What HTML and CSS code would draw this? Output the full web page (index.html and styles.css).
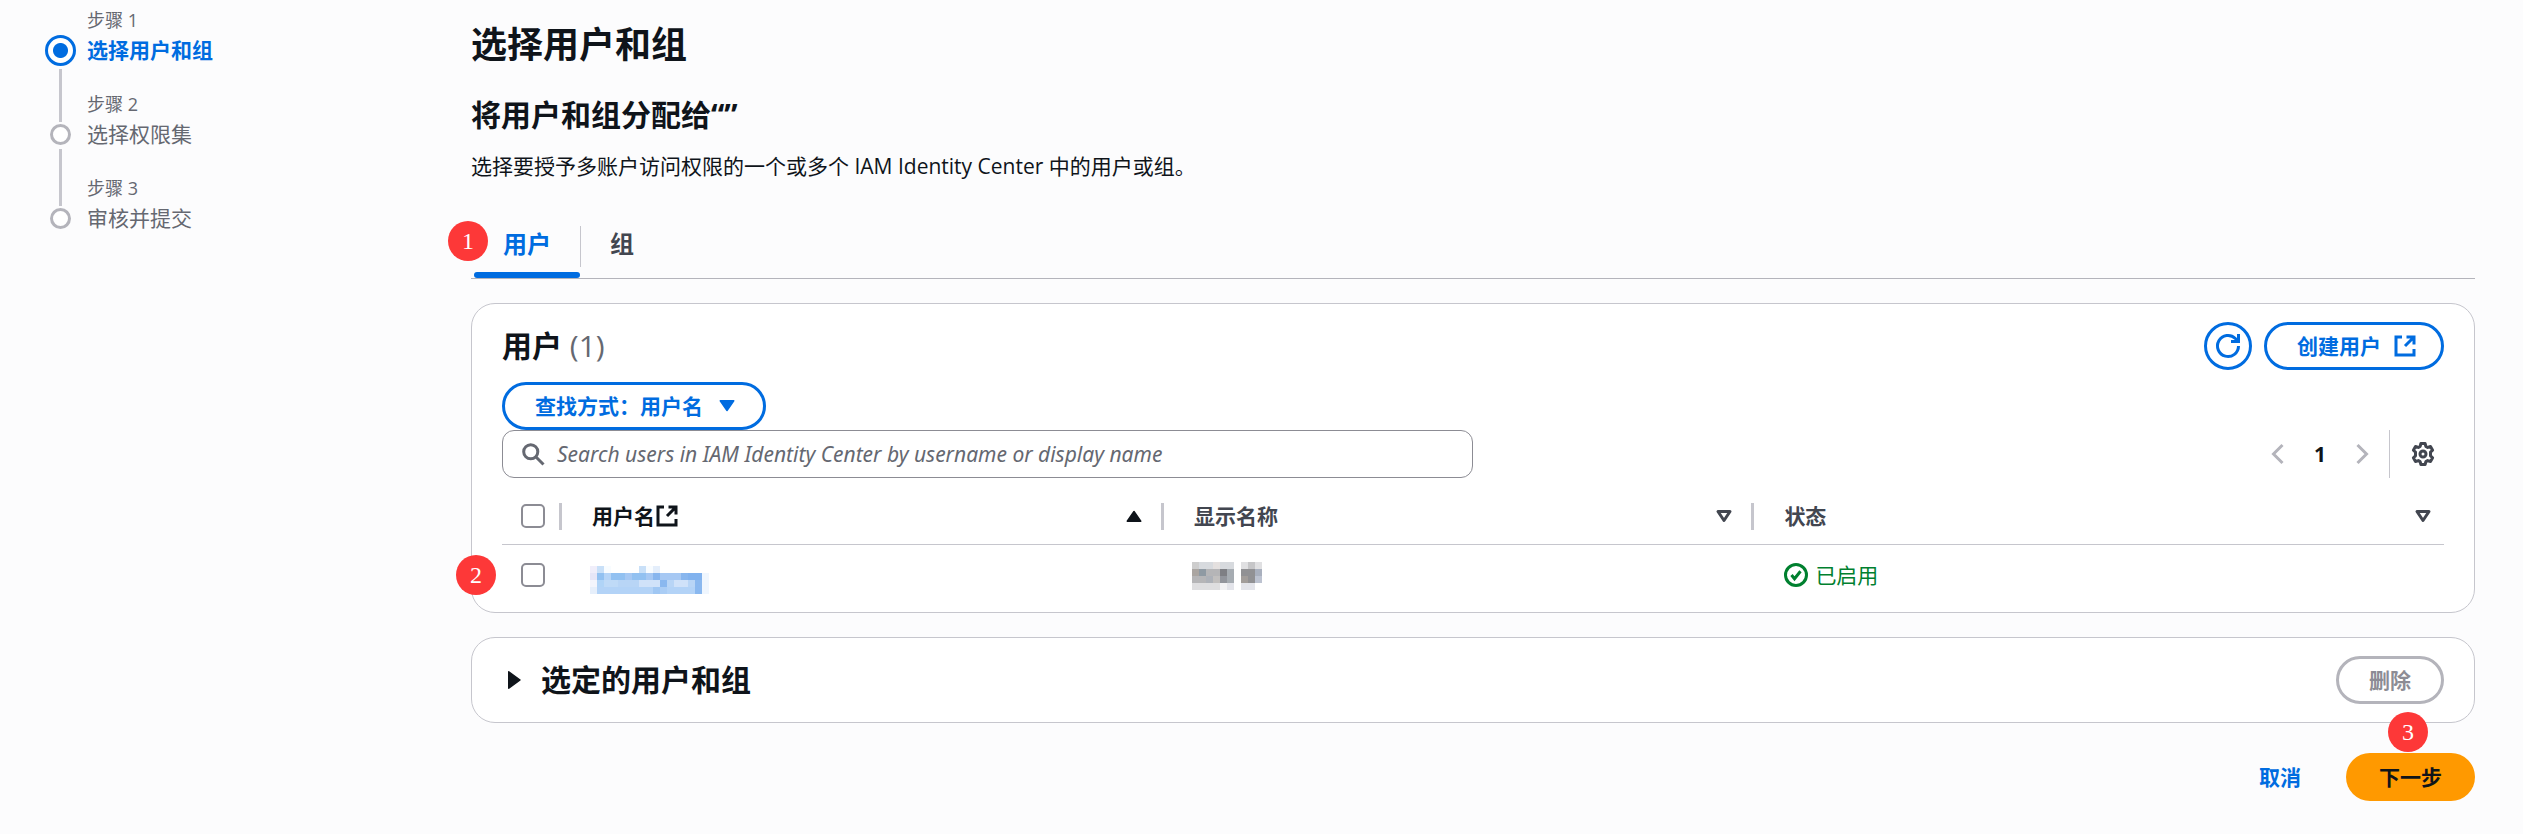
FILE: index.html
```html
<!DOCTYPE html>
<html lang="zh-CN">
<head>
<meta charset="utf-8">
<title>选择用户和组</title>
<link rel="stylesheet" href="styles.css">
</head>
<body>
<div class="layout">
  <nav class="steps" aria-label="步骤">
    <ol class="step-list">
      <li class="step step-active"><span class="step-label">步骤 1</span><span class="step-dot"></span><span class="step-title">选择用户和组</span></li>
      <li class="step"><span class="step-label">步骤 2</span><span class="step-dot"></span><span class="step-title">选择权限集</span></li>
      <li class="step"><span class="step-label">步骤 3</span><span class="step-dot"></span><span class="step-title">审核并提交</span></li>
    </ol>
  </nav>
  <main class="content">
    <h1 class="page-title">选择用户和组</h1>
    <h2 class="section-title">将用户和组分配给“”</h2>
    <p class="description">选择要授予多账户访问权限的一个或多个 IAM Identity Center 中的用户或组。</p>

    <div class="tabs" role="tablist">
      <button class="tab tab-active" role="tab" aria-selected="true" type="button">用户</button>
      <span class="tab-divider"></span>
      <button class="tab" role="tab" aria-selected="false" type="button">组</button>
      <span class="marker marker-tab">1</span>
    </div>

    <section class="card users-card">
      <header class="card-header">
        <h2 class="card-title">用户 <span class="count">(1)</span></h2>
        <div class="actions">
          <button class="button icon-button" type="button" aria-label="刷新">
            <svg class="icon" viewBox="0 0 16 16"><path d="M15 8A7 7 0 1 1 12.900 3L15 5M15 0v5h-5"/></svg>
          </button>
          <button class="button" type="button">创建用户
            <svg class="icon trailing" viewBox="0 0 16 16"><path d="M6 2H2v12h12v-4M9 2h5v5M14 2L8 8"/></svg>
          </button>
        </div>
      </header>
      <button class="button" type="button">查找方式：用户名
        <svg class="icon solid trailing" viewBox="0 0 16 16"><path d="M3.500 4.500h9L8 11z"/></svg>
      </button>
      <div class="toolbar">
        <label class="search">
          <svg class="icon" viewBox="0 0 16 16"><circle cx="6.500" cy="6.500" r="4.700"/><path d="M10 10l5 5"/></svg>
          <input class="search-input" type="text" aria-label="Search users" placeholder="Search users in IAM Identity Center by username or display name">
        </label>
        <div class="pager">
          <button class="plain-button muted" type="button" aria-label="上一页"><svg class="icon" viewBox="0 0 16 16"><path d="M11 2L5 8l6 6"/></svg></button>
          <span class="page-number">1</span>
          <button class="plain-button muted" type="button" aria-label="下一页"><svg class="icon" viewBox="0 0 16 16"><path d="M5 2l6 6-6 6"/></svg></button>
          <span class="pager-divider"></span>
          <button class="plain-button" type="button" aria-label="设置"><svg class="icon rounded" viewBox="0 0 16 16"><circle cx="8" cy="8" r="2"/><path d="M6.600 1h2.800l.5 1.900 1.200.7 1.900-.6 1.400 2.500L13 6.800v2.400l1.400 1.300L13 13l-1.900-.6-1.200.7-.5 1.900H6.600l-.5-1.900-1.200-.7L3 13l-1.400-2.500L3 9.200V6.800L1.600 5.500 3 3l1.900.6 1.200-.7z"/></svg></button>
        </div>
      </div>
      <table class="users-table">
        <colgroup><col class="col-check"><col class="col-name"><col class="col-display"><col></colgroup>
        <thead>
          <tr>
            <th><div class="heading select-heading"><input class="checkbox" type="checkbox" aria-label="全选"><span class="col-divider"></span></div></th>
            <th class="sorted"><div class="heading"><span class="heading-text">用户名<svg class="icon" viewBox="0 0 16 16"><path d="M6 2H2v12h12v-4M9 2h5v5M14 2L8 8"/></svg></span><svg class="icon solid" viewBox="0 0 16 16"><path d="M3.500 11.500h9L8 5z"/></svg><span class="col-divider"></span></div></th>
            <th><div class="heading"><span class="heading-text">显示名称</span><svg class="icon rounded" viewBox="0 0 16 16"><path d="M4 5h8l-4 6z"/></svg><span class="col-divider"></span></div></th>
            <th><div class="heading last-heading"><span class="heading-text">状态</span><svg class="icon rounded" viewBox="0 0 16 16"><path d="M4 5h8l-4 6z"/></svg></div></th>
          </tr>
        </thead>
        <tbody>
          <tr>
            <td class="select-cell"><input class="checkbox" type="checkbox" aria-label="选择用户"><span class="marker marker-row">2</span></td>
            <td class="name-cell">
              <svg class="mosaic mosaic-name" viewBox="0 0 17 4" role="img" aria-label="已隐藏的用户名">
                <path fill="#f0eefa" d="M0 0h1v1H0z"/><path fill="#c9e0f8" d="M1 0h1v1H1zM7 0h1v1H7z"/><path fill="#f8fcff" d="M2 0h1v1H2zM8 0h1v1H8z"/><path fill="#e4eefb" d="M9 0h1v1H9z"/>
                <path fill="#e6e6f7" d="M0 1h1v1H0z"/><path fill="#92c1f1" d="M1 1h1v1H1zM3 1h2v1H3zM6 1h2v1H6z"/><path fill="#b5d4f7" d="M2 1h1v1H2z"/><path fill="#a6c8f3" d="M5 1h1v1H5zM8 1h1v1H8zM10 1h3v1h-3z"/><path fill="#88b6ee" d="M9 1h1v1H9zM13 1h1v1h-1z"/><path fill="#81b2ee" d="M14 1h2v1h-2z"/>
                <path fill="#f3f5fc" d="M0 2h1v1H0z"/><path fill="#b0d4f7" d="M1 2h1v1H1zM10 2h1v1h-1z"/><path fill="#bfdaf7" d="M2 2h2v1H2z"/><path fill="#b8d5f6" d="M4 2h3v1H4zM11 2h1v1h-1zM14 2h1v1h-1z"/><path fill="#d0e2f9" d="M7 2h3v1H7zM12 2h2v1h-2z"/><path fill="#8ab8ef" d="M10 2h1v1h-1zM15 2h1v2h-1z"/>
                <path fill="#e6effb" d="M0 3h1v1H0z"/><path fill="#b3d3f7" d="M1 3h8v1H1zM11 3h4v1h-4z"/><path fill="#a0c7f3" d="M9 3h1v1H9z"/><path fill="#aacdf5" d="M10 3h1v1h-1z"/><path fill="#eff6fe" d="M16 1h1v3h-1z"/>
              </svg>
            </td>
            <td class="name-cell">
              <svg class="mosaic mosaic-display" viewBox="0 0 10 4" role="img" aria-label="已隐藏的显示名称">
                <path fill="#cdcdcd" d="M0 0h1v1H0z"/><path fill="#d7dade" d="M1 0h2v1H1zM4 0h2v1H4z"/><path fill="#e4e0df" d="M3 0h1v1H3z"/><path fill="#e0e0e2" d="M7 0h1v1H7zM9 0h1v1H9z"/><path fill="#c6c6c8" d="M8 0h1v1H8z"/>
                <path fill="#aaa5a1" d="M0 1h1v1H0z"/><path fill="#8f9aa3" d="M1 1h1v1H1z"/><path fill="#b5b5b7" d="M2 1h2v1H2zM0 2h2v1H0z"/><path fill="#7e7f84" d="M4 1h1v1H4z"/><path fill="#a6acb2" d="M5 1h1v2H5z"/><path fill="#919194" d="M7 1h2v1H7zM8 2h1v1H8z"/><path fill="#a9b0be" d="M9 1h1v1H9z"/>
                <path fill="#adb1b8" d="M2 2h1v1H2z"/><path fill="#c1bfbe" d="M3 2h1v1H3z"/><path fill="#92959c" d="M4 2h1v1H4z"/><path fill="#a29d9a" d="M7 2h1v1H7z"/><path fill="#bcc2d0" d="M9 2h1v1H9z"/>
                <path fill="#dedee0" d="M0 3h4v1H0z"/><path fill="#f2f2f4" d="M4 3h1v1H4z"/><path fill="#e3e4ea" d="M5 3h1v1H5zM7 3h2v1H7z"/>
              </svg>
            </td>
            <td class="status-cell"><span class="status"><svg class="icon" viewBox="0 0 16 16"><circle cx="8" cy="8" r="7"/><path d="M5 8l2 2.500 4-5"/></svg>已启用</span></td>
          </tr>
        </tbody>
      </table>
    </section>

    <section class="card selected-card">
      <button class="expander" type="button" aria-expanded="false">
        <svg class="icon solid" viewBox="0 0 16 16"><path d="M4.500 2.500v11L12 8z"/></svg>选定的用户和组
      </button>
      <button class="button" type="button" disabled>删除</button>
    </section>

    <footer class="footer">
      <button class="link-button" type="button">取消</button>
      <button class="primary-button" type="button">下一步<span class="marker marker-next">3</span></button>
    </footer>
  </main>
</div>
</body>
</html>
```
FILE: styles.css
```css
* { box-sizing: border-box; }
body {
  margin: 0;
  background: #fcfcfd;
  color: #0f141a;
  font: 21px/30px "Open Sans", "Noto Sans CJK SC", sans-serif;
}
button, input { font: inherit; color: inherit; }
button { padding: 0; border: 0; background: none; cursor: pointer; }
h1, h2, p, ol { margin: 0; padding: 0; }
.layout { display: flex; padding: 0 48px 33px 45px; }

/* Wizard steps */
.steps { flex: 0 0 426px; padding-top: 5px; }
.step-list { list-style: none; }
.step {
  display: grid;
  grid-template: 30px 30px 24px / 31px 1fr;
  column-gap: 11px;
  color: #656871;
}
.step-label { grid-area: 1 / 2; font-size: 18px; }
.step-title { grid-area: 2 / 2; }
.step-dot {
  grid-area: 2 / 1;
  place-self: center;
  width: 21px;
  height: 21px;
  border: 3px solid #b4b4bb;
  border-radius: 50%;
  background: #fff;
}
.step-active .step-dot {
  width: 31px;
  height: 31px;
  border-color: #006ce0;
  background: radial-gradient(circle, #006ce0 7px, #fff 8px);
}
.step-active .step-title { color: #006ce0; font-weight: 700; }
.step::before, .step::after { justify-self: center; width: 3px; background: #c6c6cd; }
.step + .step::before { content: ""; grid-area: 1 / 1; margin-bottom: -3px; }
.step:not(:last-child)::after { content: ""; grid-area: 3 / 1; }
.step-active::after { margin-top: 4px; }

/* Page header */
.content { flex: 1; min-width: 0; padding-top: 21px; }
.page-title { font-size: 36px; line-height: 48px; }
.section-title { margin-top: 28px; font-size: 30px; line-height: 36px; }
.description { margin-top: 18px; }

/* Tabs */
.tabs {
  position: relative;
  display: flex;
  align-items: center;
  margin-top: 34px;
  padding-left: 3px;
  border-bottom: 1px solid #b4b4bb;
}
.tab {
  position: relative;
  padding: 14px 29px 19px;
  color: #424650;
  font-size: 24px;
  font-weight: 700;
}
.tab-active { color: #006ce0; }
.tab-active::after {
  content: "";
  position: absolute;
  inset: auto 0 0;
  height: 6px;
  border-radius: 3px;
  background: #006ce0;
}
.tab-divider { width: 1px; height: 41px; background: #c6c6cd; }

/* Callout markers */
.marker {
  position: absolute;
  width: 40px;
  height: 40px;
  border-radius: 50%;
  background: #fd3838;
  color: #fff;
  font: 24px/40px "Liberation Serif", serif;
  text-align: center;
}
.marker-tab { left: -23px; top: 6px; }
.marker-row { left: -46px; top: 10px; }
.marker-next { left: 42px; top: -41px; }

/* Cards */
.card {
  margin-top: 24px;
  padding: 18px 30px;
  border: 1px solid #c6c6cd;
  border-radius: 24px;
  background: #fff;
}
.users-card { padding-bottom: 7px; }
.card-header { display: flex; justify-content: space-between; align-items: center; margin-bottom: 12px; }
.card-title { font-size: 30px; line-height: 36px; }
.count { color: #656871; font-weight: 400; }
.actions { display: flex; gap: 12px; }
.selected-card { display: flex; justify-content: space-between; align-items: center; }
.expander { display: flex; align-items: center; gap: 15px; font-size: 30px; font-weight: 700; }

/* Icons */
.icon {
  flex: none;
  display: block;
  width: 24px;
  height: 24px;
  overflow: visible;
  fill: none;
  stroke: currentColor;
  stroke-width: 2;
}
.rounded, .solid { stroke-linejoin: round; }
.solid { fill: currentColor; stroke-width: 1; }

/* Buttons */
.button {
  display: flex;
  align-items: center;
  gap: 12px;
  height: 48px;
  padding: 0 30px;
  border: 3px solid #006ce0;
  border-radius: 24px;
  background: #fff;
  color: #006ce0;
  font-weight: 700;
}
.button:has(.trailing) { padding-right: 24px; }
.icon-button { width: 48px; padding: 0; justify-content: center; }
.button:disabled { border-color: #b4b4bb; color: #8c8c94; cursor: default; }
.plain-button { color: #424650; }
.muted { color: #b4b4bb; }
.primary-button, .link-button { height: 48px; font-weight: 700; }
.primary-button { position: relative; padding: 0 33px; border-radius: 24px; background: #ff9900; }
.primary-button .marker { font-weight: 400; }
.link-button { color: #006ce0; }
.footer { display: flex; justify-content: flex-end; gap: 45px; margin-top: 30px; }

/* Search and paging */
.toolbar { display: flex; justify-content: space-between; align-items: center; }
.search {
  display: flex;
  align-items: center;
  gap: 12px;
  width: 50%;
  height: 48px;
  padding: 0 18px;
  border: 1px solid #8c8c94;
  border-radius: 12px;
  color: #656871;
}
.search-input { flex: 1; min-width: 0; padding: 0; border: 0; outline: 0; background: none; color: #0f141a; font-family: "Noto Sans", sans-serif; }
.search-input::placeholder { color: #656871; font-style: italic; opacity: 1; }
.pager { display: flex; align-items: center; padding-right: 9px; }
.page-number { width: 60px; text-align: center; font-weight: 700; }
.pager-divider { width: 1px; height: 48px; margin: 0 21px 0 15px; background: #c6c6cd; }

/* Table */
.users-table { width: 100%; margin-top: 10px; border-collapse: separate; border-spacing: 0; table-layout: fixed; }
.col-check { width: 60px; }
.col-name { width: 31%; }
.col-display { width: 30.4%; }
th { height: 57px; padding: 0; border-bottom: 1px solid #c6c6cd; color: #424650; text-align: left; }
td { height: 60px; padding: 0; vertical-align: middle; }
.sorted { color: #0f141a; }
.heading { display: flex; align-items: center; padding-left: 30px; }
.select-heading { justify-content: space-between; padding-left: 19px; }
.last-heading { padding-right: 9px; }
.heading-text { flex: 1; display: flex; align-items: center; }
.col-divider { width: 3px; height: 27px; margin-left: 15px; background: #c6c6cd; }
.select-heading .col-divider { margin-left: 0; }
.checkbox {
  appearance: none;
  display: block;
  width: 24px;
  height: 24px;
  margin: 0;
  border: 2px solid #8c8c94;
  border-radius: 5px;
  background: #fff;
}
.select-cell { position: relative; padding-left: 19px; }
.name-cell { padding-left: 28px; }
.status-cell { padding-left: 30px; }
.mosaic { display: block; height: 28px; shape-rendering: crispEdges; }
.mosaic-name { width: 119px; margin-top: 10px; }
.mosaic-display { width: 70px; margin-top: 2px; }
.status { display: flex; align-items: center; gap: 7px; color: #00802f; }
```
